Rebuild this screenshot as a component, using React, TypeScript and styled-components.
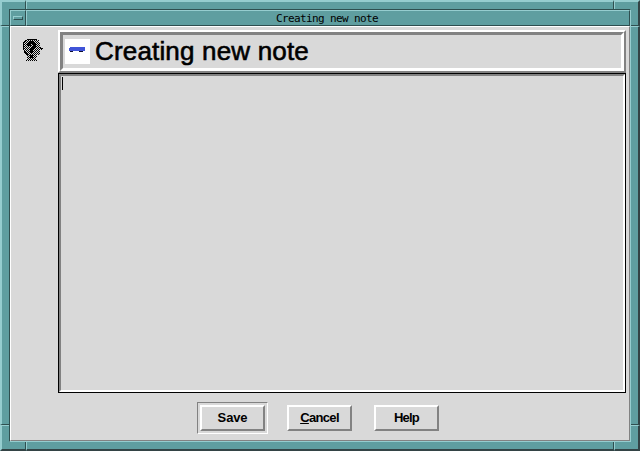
import React from "react";
import styled, { createGlobalStyle } from "styled-components";

const teal = "#5f9ea0";
const light = "#96cdcf";
const dark = "#2f4f50";
const face = "#d9d9d9";
const shade = "#828282";

const GlobalStyle = createGlobalStyle`
  body { margin: 0; background: ${teal}; overflow: hidden; }
  * { box-sizing: border-box; }
`;

const Window = styled.div`
  display: grid;
  grid-template-columns: 26px 1fr 26px;
  grid-template-rows: 26px 1fr 26px;
  width: 640px;
  height: 451px;
  background: ${teal};
`;

const outer = "#334345";
const Handle = styled.div<{ $row: number; $col: number }>`
  grid-area: ${(p) => p.$row} / ${(p) => p.$col};
  border-style: solid;
  border-color: ${(p) => `${light} ${p.$col === 3 ? outer : dark} ${p.$row === 3 ? outer : dark} ${light}`};
  border-width: ${(p) =>
    `${p.$row === 1 ? 2 : 1}px ${p.$col === 3 ? 2 : 1}px ${p.$row === 3 ? 2 : 1}px ${p.$col === 1 ? 2 : 1}px`};
`;

const Client = styled.div`
  grid-area: 1 / 1 / -1 / -1;
  margin: 9px;
  display: flex;
  flex-direction: column;
  background: ${face};
  border: 1px solid;
  border-color: ${dark} ${light} ${light} ${dark};
`;

const TitleBar = styled.div`
  display: flex;
  height: 16px;
  flex: none;
  background: ${teal};
`;

const MenuButton = styled.div`
  width: 16px;
  display: flex;
  align-items: center;
  justify-content: center;
  border: 1px solid;
  border-color: ${light} ${dark} ${dark} ${light};
`;

const MenuBar = styled.div`
  width: 10px;
  height: 4px;
  border: 1px solid;
  border-color: ${light} ${dark} ${dark} ${light};
`;

const Title = styled.div`
  flex: 1;
  border: 1px solid;
  border-color: ${light} ${dark} ${dark} ${light};
  padding-right: 2px;
  font: 11px/15px "DejaVu Sans Mono", monospace;
  letter-spacing: -0.62px;
  text-align: center;
  color: #000;
  white-space: pre;
`;

const Body = styled.div`
  flex: 1;
  display: flex;
  flex-direction: column;
  border: 1px solid;
  border-color: #fff ${shade} ${shade} #fff;
  padding: 3px 3px 0 0;
`;

const Main = styled.div`
  display: grid;
  grid-template-columns: 47px 568px;
`;

const Side = styled.div`
  padding: 9px 0 0 12px;
`;

const Pane = styled.div`
  display: flex;
  flex-direction: column;
`;

const Header = styled.div`
  height: 43px;
  border: 2px solid;
  border-color: #fff ${shade} ${shade} #fff;
`;

const HeaderInner = styled.div`
  height: 39px;
  border: 3px solid;
  border-color: ${shade} #fff #fff ${shade};
  display: flex;
  align-items: center;
  padding-left: 2px;
`;

const IconTile = styled.div`
  width: 25px;
  height: 25px;
  background: #fff;
  display: flex;
`;

const Heading = styled.div`
  margin-left: 5px;
  padding-bottom: 2px;
  font: 26px/28px "Liberation Sans", sans-serif;
  letter-spacing: 0.17px;
  -webkit-text-stroke: 0.6px #000;
  color: #000;
  white-space: pre;
`;

const Editor = styled.div`
  height: 320px;
  border: 1px solid #000;
`;

const EditorInner = styled.div`
  height: 318px;
  border: 2px solid;
  border-color: ${shade} #fff #fff ${shade};
  padding: 1px;
`;

const Caret = styled.div`
  width: 1px;
  height: 13px;
  background: #000;
`;

const Buttons = styled.div`
  display: flex;
  align-items: center;
  height: 32px;
  margin: 9px 0 0 186px;
`;

const DefaultRing = styled.div`
  padding: 2px;
  height: 32px;
  width: 71px;
  border: 1px solid;
  border-color: ${shade} #fff #fff ${shade};
`;

const Button = styled.div<{ $left?: number; $spacing: number }>`
  width: 65px;
  height: 26px;
  margin-left: ${(p) => p.$left ?? 0}px;
  border: 2px solid;
  border-color: #fff ${shade} ${shade} #fff;
  font: bold 13px/22px "Liberation Sans", sans-serif;
  letter-spacing: ${(p) => p.$spacing}px;
  text-align: center;
  color: #000;
`;

const Mnemonic = styled.span`
  text-decoration: underline;
  text-underline-offset: 1px;
  text-decoration-thickness: 1px;
`;

const HeadIcon = () => (
  <svg width="20" height="22" viewBox="0 0 20 22" shapeRendering="crispEdges" display="block">
    <defs>
      <pattern id="dither" width="2" height="2" patternUnits="userSpaceOnUse">
        <path d="M0 0h1v1h-1zM1 1h1v1h-1z" />
      </pattern>
    </defs>
    <path d="M4 0h10v1h2v2h1v5h1v1h2v1h-1v1h-2v5h-3v2h-1v3h1v1H3v-2h1v-4H3v-1H2v-1H1v-2H0V3h1V2h1V1h2z" fill="url(#dither)" />
    <path d="M4 0h10v1H4zM2 1h2v1H2zM1 2h1v1H1zM0 3h1v8H0zM1 11h1v2H1zM2 13h1v1H2zM3 14h2v2H3zM17 8h1v1h-1zM18 9h2v1h-2z" />
    <path d="M6 2h5v1h1v1h1v5h-1v1h-1v1h-1v3H7v-4h1V9h1V8h1V5H9V4H8v3H4V4h1V3h1zM7 16h3v3H7z" />
  </svg>
);

const NoteIcon = () => (
  <svg width="25" height="25" viewBox="0 0 25 25" shapeRendering="crispEdges">
    <path fill="#4054d8" d="M5 8h15v4H4V9h1z" />
    <path fill="#101030" d="M5 12h3v1H5zM14 12h4v1h-4z" />
  </svg>
);

export default function App() {
  return (
    <>
      <GlobalStyle />
      <Window>
        {[1, 2, 3].map((row) => [1, 2, 3].map((col) => <Handle key={`${row}${col}`} $row={row} $col={col} />))}
        <Client>
          <TitleBar>
            <MenuButton><MenuBar /></MenuButton>
            <Title>Creating new note</Title>
          </TitleBar>
          <Body>
            <Main>
              <Side><HeadIcon /></Side>
              <Pane>
                <Header>
                  <HeaderInner>
                    <IconTile><NoteIcon /></IconTile>
                    <Heading>Creating new note</Heading>
                  </HeaderInner>
                </Header>
                <Editor>
                  <EditorInner><Caret /></EditorInner>
                </Editor>
              </Pane>
            </Main>
            <Buttons>
              <DefaultRing><Button $spacing={-0.15}>Save</Button></DefaultRing>
              <Button $left={19} $spacing={-0.65}><Mnemonic>C</Mnemonic>ancel</Button>
              <Button $left={22} $spacing={-0.8}>Help</Button>
            </Buttons>
          </Body>
        </Client>
      </Window>
    </>
  );
}
